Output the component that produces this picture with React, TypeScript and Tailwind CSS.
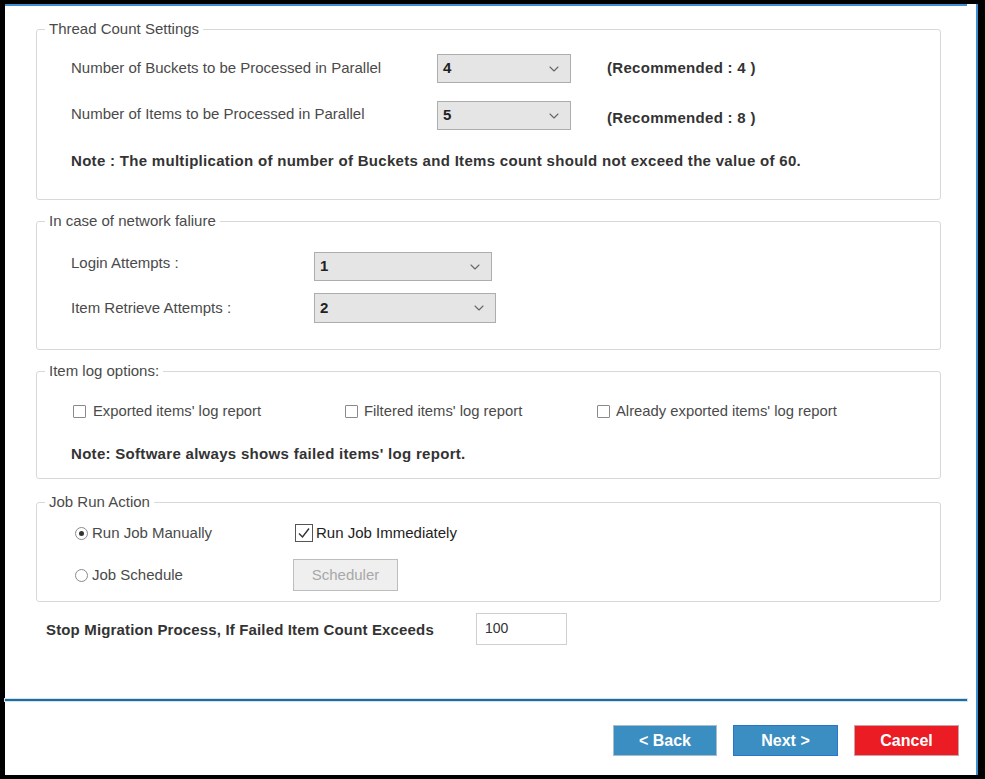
import React from "react";
import { ChevronDown } from "lucide-react";

const font = { fontFamily: '"Liberation Sans", Arial, sans-serif' };

function Select({ value, w, h }: { value: string; w: string; h: string }) {
  return (
    <div
      className={`${w} ${h} flex items-center justify-between bg-[#e5e5e5] border border-[#adadad] pl-[5px] pr-[8px]`}
    >
      <span className="text-[15px] font-bold text-[#222]">{value}</span>
      <ChevronDown size={16} strokeWidth={1.6} className="text-[#666]" />
    </div>
  );
}

function Box() {
  return (
    <span className="w-[13px] h-[13px] border border-[#8a8a8a] bg-white inline-block shrink-0 rounded-[1px]" />
  );
}

function Radio({ on = false }: { on?: boolean }) {
  return (
    <span className="w-[13px] h-[13px] rounded-full border border-[#8a8a8a] bg-white flex items-center justify-center shrink-0">
      {on && <span className="w-[5px] h-[5px] rounded-full bg-[#333]" />}
    </span>
  );
}

function Group({
  title,
  h,
  extra = "",
  children,
}: {
  title: string;
  h: string;
  extra?: string;
  children: React.ReactNode;
}) {
  return (
    <fieldset className={`${h} ${extra} border border-[#d8d8d8] rounded-[3px] ml-[31px] mr-[35px]`}>
      <legend className="ml-[8px] px-[4px] text-[15px] leading-[20px] text-[#4a4a4a]">
        {title}
      </legend>
      {children}
    </fieldset>
  );
}

const bold = "text-[15px] tracking-[0.3px] font-bold text-[#333]";

export default function App() {
  return (
    <div
      style={font}
      className="w-[985px] h-[779px] bg-black pl-[5px] pt-[4px] pr-[7px] pb-[4px]"
    >
      <div className="h-full bg-white flex flex-col border-r-2 border-[#3d8fd1]">
        <div className="h-[2px] bg-[#3d8fd1] mr-[9px]" />

        <Group title="Thread Count Settings" h="h-[181px]" extra="mt-[13px]">
          <div className="pl-[34px] pt-[15px] text-[15px] text-[#4a4a4a]">
            <div className="flex items-center h-[29px]">
              <span className="w-[366px]">Number of Buckets to be Processed in Parallel</span>
              <Select value="4" w="w-[134px]" h="h-[29px]" />
              <span className={`ml-[36px] ${bold}`}>(Recommended : 4 )</span>
            </div>
            <div className="flex items-center h-[29px] mt-[18px]">
              <span className="w-[366px] mb-[3px]">Number of Items to be Processed in Parallel</span>
              <Select value="5" w="w-[134px]" h="h-[29px]" />
              <span className={`ml-[36px] mt-[5px] ${bold}`}>(Recommended : 8 )</span>
            </div>
            <div className={`mt-[21px] leading-[20px] ${bold}`}>
              Note : The multiplication of number of Buckets and Items count should not exceed the value of 60.
            </div>
          </div>
        </Group>

        <Group title="In case of network faliure" h="h-[139px]" extra="mt-[11px]">
          <div className="pl-[34px] pt-[21px] text-[15px] text-[#4a4a4a]">
            <div className="flex items-center h-[29px]">
              <span className="w-[243px] mb-[6px]">Login Attempts :</span>
              <Select value="1" w="w-[178px]" h="h-[29px]" />
            </div>
            <div className="flex items-center h-[30px] mt-[12px]">
              <span className="w-[243px]">Item Retrieve Attempts :</span>
              <Select value="2" w="w-[182px]" h="h-[30px]" />
            </div>
          </div>
        </Group>

        <Group title="Item log options:" h="h-[118px]" extra="mt-[11px]">
          <div className="pl-[36px] pt-[20px] text-[14.8px] text-[#4a4a4a]">
            <div className="flex items-center h-[20px]">
              <div className="w-[272px] flex items-center gap-[7px]">
                <Box />
                <span>Exported items' log report</span>
              </div>
              <div className="w-[252px] flex items-center gap-[6px]">
                <Box />
                <span>Filtered items' log report</span>
              </div>
              <div className="flex items-center gap-[6px]">
                <Box />
                <span>Already exported items' log report</span>
              </div>
            </div>
            <div className={`mt-[23px] -ml-[2px] leading-[20px] ${bold}`}>
              Note: Software always shows failed items' log report.
            </div>
          </div>
        </Group>

        <Group title="Job Run Action" h="h-[110px]" extra="mt-[13px]">
          <div className="pl-[38px] pt-[11px] text-[15px] text-[#4a4a4a]">
            <div className="flex items-center h-[20px]">
              <div className="w-[220px] flex items-center gap-[4px]">
                <Radio on />
                <span>Run Job Manually</span>
              </div>
              <div className="flex items-center gap-[3px]">
                <span className="w-[18px] h-[18px] border border-[#555] bg-white flex items-center justify-center">
                  <svg width="14" height="14" viewBox="0 0 14 14">
                    <path d="M2 7.5 L5.5 11 L12 2.5" fill="none" stroke="#333" strokeWidth="1.4" />
                  </svg>
                </span>
                <span className="text-[#222]">Run Job Immediately</span>
              </div>
            </div>
            <div className="flex items-center h-[32px] mt-[16px]">
              <div className="w-[218px] flex items-center gap-[4px]">
                <Radio />
                <span>Job Schedule</span>
              </div>
              <div className="w-[105px] h-[32px] bg-[#efefef] border border-[#bdbdbd] flex items-center justify-center text-[#a8a8a8]">
                Scheduler
              </div>
            </div>
          </div>
        </Group>

        <div className="mt-[11px] ml-[41px] flex items-center h-[32px]">
          <span className="w-[430px] mt-[2px] text-[15px] tracking-[0.15px] font-bold text-[#333]">
            Stop Migration Process, If Failed Item Count Exceeds
          </span>
          <div className="w-[91px] h-[32px] border border-[#cfcfcf] bg-white pl-[8px] pt-[4px] text-[14px] text-[#333]">
            100
          </div>
        </div>

        <div className="mt-[54px] h-[2px] bg-[#1d6e9f] mr-[9px] shadow-[0_0_0_1px_#d3e3ee]" />

        <div className="mt-[24px] flex justify-end gap-[16px] pr-[17px]">
          <button className="w-[104px] h-[31px] bg-[#3b8ec2] border border-[#a9bccb] text-white font-bold text-[16px]">
            &lt; Back
          </button>
          <button className="w-[105px] h-[31px] bg-[#3b8ec2] border border-[#2a74cc] text-white font-bold text-[16px]">
            Next &gt;
          </button>
          <button className="w-[105px] h-[31px] bg-[#ec1c24] border border-[#c9a4a4] text-white font-bold text-[16px]">
            Cancel
          </button>
        </div>
      </div>
    </div>
  );
}
